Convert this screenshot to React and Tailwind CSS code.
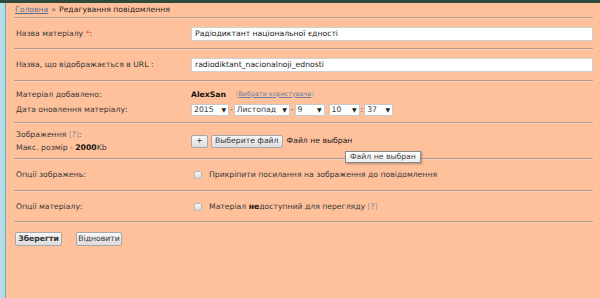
import React from "react";

const Line = () => (
  <div className="ml-[8px] mr-[7px] h-[2px] border-t border-[#b89c8a] bg-[#f6d2bc] shrink-0" />
);

const Sel = ({ v, w }) => (
  <div className={`h-[12px] ${w} bg-white border border-[#c9c9c9] flex items-center justify-between px-[2px]`}>
    <span>{v}</span>
    <span className="text-[6px] text-[#222]">▼</span>
  </div>
);

const Btn = ({ children, className = "" }) => (
  <div className={`h-[13px] px-[3px] flex items-center border border-[#a8a8a8] rounded-[2px] bg-gradient-to-b from-[#f8f8f8] to-[#dcdcdc] text-[#333] ${className}`}>
    {children}
  </div>
);

const Check = () => (
  <div className="w-[8px] h-[8px] border border-[#b8b8b8] rounded-[1px] bg-gradient-to-b from-[#f4f4f4] to-[#dadada]" />
);

export default function App() {
  return (
    <div
      className="w-[600px] h-[298px] flex flex-col overflow-hidden text-[7.7px] text-[#383838] relative"
      style={{ fontFamily: '"DejaVu Sans", Verdana, sans-serif' }}
    >
      <div className="h-[3px] bg-[#2e4a3c] shrink-0" />
      <div className="flex flex-1">
        <div className="w-[6px] bg-[#b4dbe6] border-r border-[#6aa6b5]" />
        <div className="flex-1 bg-[#fec19b] flex flex-col relative">
          {/* breadcrumb */}
          <div className="h-[14px] flex items-center pl-[9px] shrink-0">
            <span className="text-[#5a6f8e] underline">Головна</span>
            <span className="mx-[3px] text-[#666]">»</span>
            <span className="text-[#222]">Редагування повідомлення</span>
          </div>
          <Line />
          {/* row 1 */}
          <div className="h-[29px] flex items-center pl-[10px] shrink-0">
            <div className="w-[175px]">
              Назва матеріалу <span className="text-[#ff3b3b]">*</span>:
            </div>
            <div className="flex-1 mr-[7px] h-[14px] bg-white border border-[#cfcfcf] flex items-center pl-[3px] text-[#222]">
              Радіодиктант національної єдності
            </div>
          </div>
          <Line />
          {/* row 2 */}
          <div className="h-[30px] flex items-center pl-[10px] shrink-0">
            <div className="w-[175px]">Назва, що відображається в URL :</div>
            <div className="flex-1 mr-[7px] h-[14px] bg-white border border-[#cfcfcf] flex items-center pl-[3px] text-[#222]">
              radiodiktant_nacionalnoji_ednosti
            </div>
          </div>
          <Line />
          {/* row 3 */}
          <div className="h-[40px] flex flex-col justify-center gap-[3px] pl-[10px] shrink-0">
            <div className="flex items-center h-[12px]">
              <div className="w-[175px]">Матеріал добавлено:</div>
              <span className="font-bold text-[#111]">AlexSan</span>
              <span className="ml-[10px] text-[6.4px] text-[#999]">
                [<span className="text-[#6a7fa6] underline">Вибрати користувача</span>]
              </span>
            </div>
            <div className="flex items-center h-[12px]">
              <div className="w-[175px]">Дата оновлення матеріалу:</div>
              <Sel v="2015" w="w-[38px]" />
              <span className="mx-[1px]">-</span>
              <Sel v="Листопад" w="w-[56px]" />
              <span className="mx-[1px]">-</span>
              <Sel v="9" w="w-[30px]" />
              <span className="w-[4px]" />
              <Sel v="10" w="w-[31px]" />
              <span className="mx-[1px]">:</span>
              <Sel v="37" w="w-[29px]" />
            </div>
          </div>
          <Line />
          {/* row 4 */}
          <div className="h-[34px] flex items-center pl-[10px] shrink-0">
            <div className="w-[175px] flex flex-col gap-[1px]">
              <div>
                Зображення <span className="text-[#999]">[<span className="text-[#6a7fa6]">?</span>]</span>:
              </div>
              <div>
                Макс. розмір - <span className="font-bold text-[#111]">2000</span>Kb
              </div>
            </div>
            <div className="flex items-center gap-[3px]">
              <Btn className="w-[17px] justify-center">+</Btn>
              <Btn>Выберите файл</Btn>
              <span className="ml-[1px] text-[#222]">Файл не выбран</span>
            </div>
          </div>
          <Line />
          {/* row 5 */}
          <div className="h-[30px] flex items-center pl-[10px] shrink-0">
            <div className="w-[178px]">Опції зображень:</div>
            <Check />
            <span className="ml-[7px]">Прикріпити посилання на зображення до повідомлення</span>
          </div>
          <Line />
          {/* row 6 */}
          <div className="h-[29px] flex items-center pl-[10px] shrink-0">
            <div className="w-[178px]">Опції матеріалу:</div>
            <Check />
            <span className="ml-[7px]">
              Матеріал <span className="font-bold text-[#111]">не</span>доступний для перегляду{" "}
              <span className="text-[#999]">[<span className="text-[#6a7fa6]">?</span>]</span>
            </span>
          </div>
          <Line />
          {/* buttons */}
          <div className="mt-[9px] flex items-center gap-[14px] pl-[9px]">
            <Btn className="w-[47px] justify-center font-bold text-[#111] h-[14px]">Зберегти</Btn>
            <Btn className="w-[46px] justify-center h-[14px] text-[#3d4a60]">Відновити</Btn>
          </div>

          {/* tooltip */}
          <div className="absolute left-[339px] top-[148px] h-[12px] px-[4px] flex items-center bg-gradient-to-b from-white to-[#ececec] border border-[#8a8a8a] shadow-[1px_1px_2px_rgba(0,0,0,0.3)] text-[#444]">
            Файл не выбран
          </div>
        </div>
      </div>
    </div>
  );
}
